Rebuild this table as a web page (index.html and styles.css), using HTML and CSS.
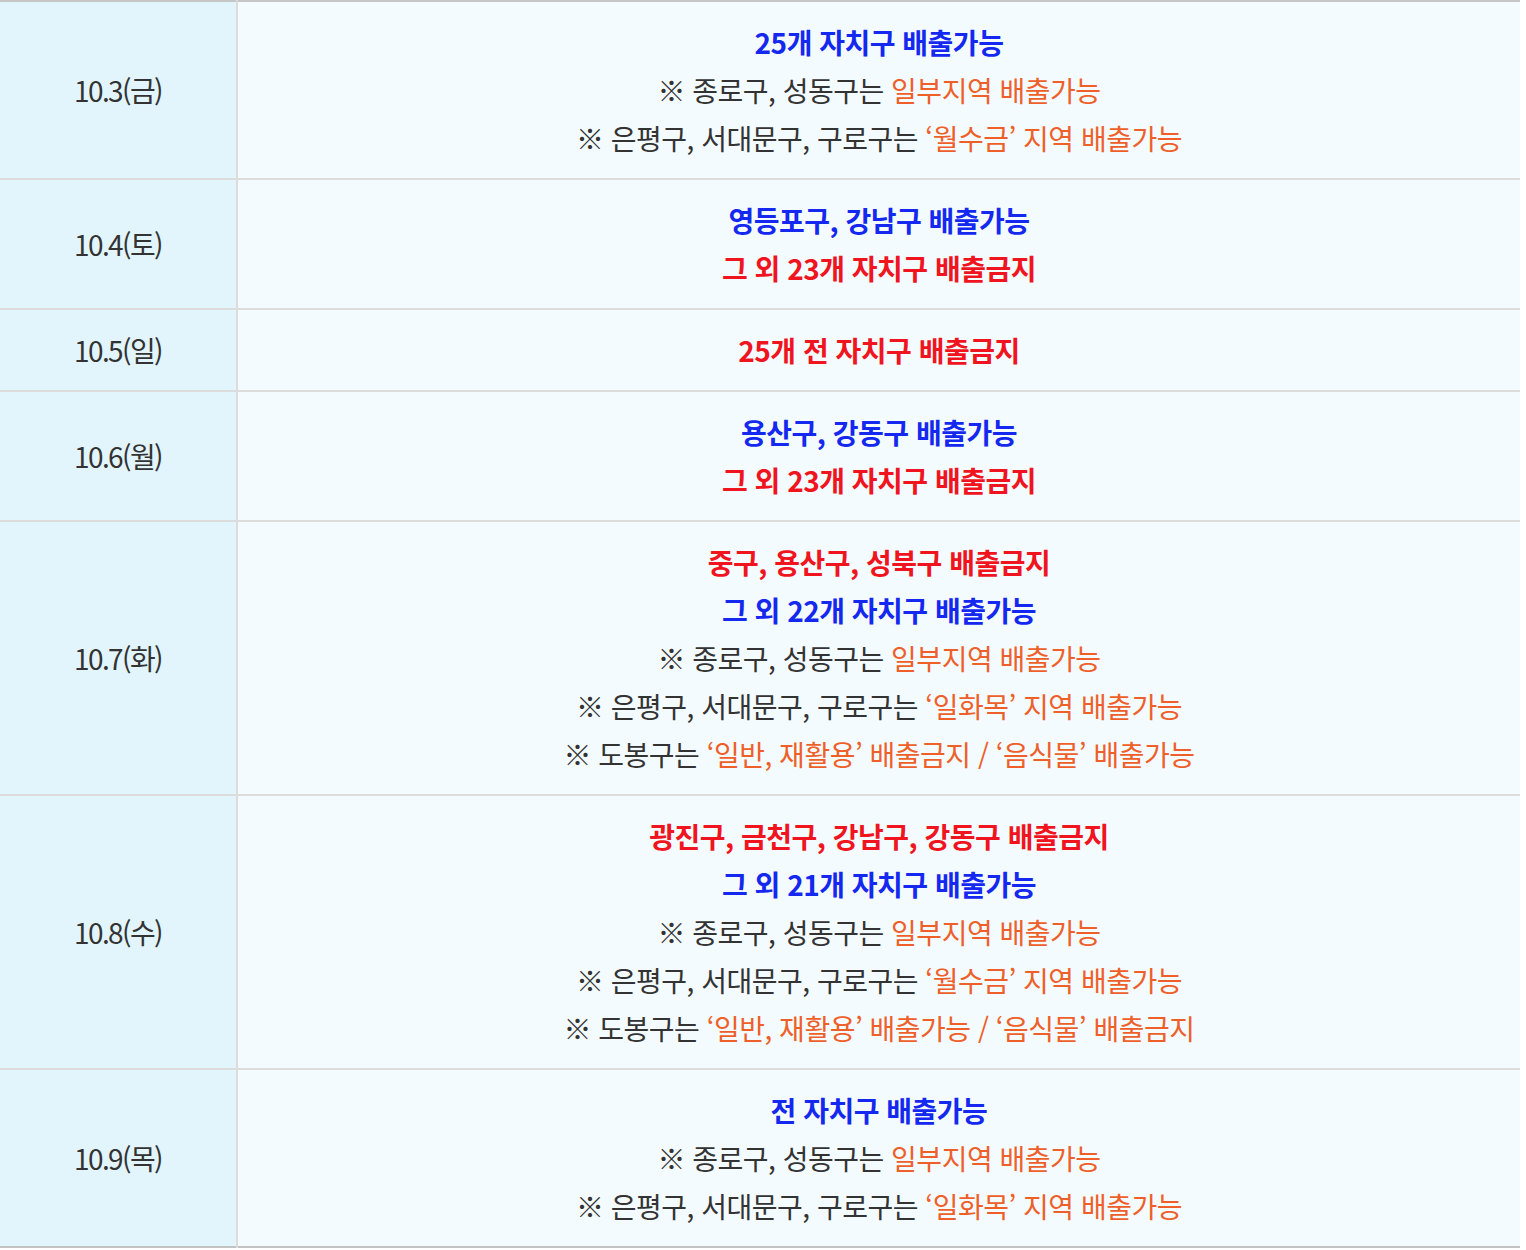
FILE: index.html
```html
<!DOCTYPE html>
<html lang="ko">
<head>
<meta charset="utf-8">
<link rel="stylesheet" href="styles.css">
</head>
<body>
<table class="sched">
  <tbody>
    <tr>
      <th class="date">10.3(금)</th>
      <td class="info">
        <p class="b">25개 자치구 배출가능</p>
        <p>※ 종로구, 성동구는 <span class="o">일부지역 배출가능</span></p>
        <p>※ 은평구, 서대문구, 구로구는 <span class="o">‘월수금’ 지역 배출가능</span></p>
      </td>
    </tr>
    <tr>
      <th class="date">10.4(토)</th>
      <td class="info">
        <p class="b">영등포구, 강남구 배출가능</p>
        <p class="r">그 외 23개 자치구 배출금지</p>
      </td>
    </tr>
    <tr>
      <th class="date">10.5(일)</th>
      <td class="info">
        <p class="r">25개 전 자치구 배출금지</p>
      </td>
    </tr>
    <tr>
      <th class="date">10.6(월)</th>
      <td class="info">
        <p class="b">용산구, 강동구 배출가능</p>
        <p class="r">그 외 23개 자치구 배출금지</p>
      </td>
    </tr>
    <tr>
      <th class="date">10.7(화)</th>
      <td class="info">
        <p class="r">중구, 용산구, 성북구 배출금지</p>
        <p class="b">그 외 22개 자치구 배출가능</p>
        <p>※ 종로구, 성동구는 <span class="o">일부지역 배출가능</span></p>
        <p>※ 은평구, 서대문구, 구로구는 <span class="o">‘일화목’ 지역 배출가능</span></p>
        <p>※ 도봉구는 <span class="o">‘일반, 재활용’ 배출금지 / ‘음식물’ 배출가능</span></p>
      </td>
    </tr>
    <tr>
      <th class="date">10.8(수)</th>
      <td class="info">
        <p class="r">광진구, 금천구, 강남구, 강동구 배출금지</p>
        <p class="b">그 외 21개 자치구 배출가능</p>
        <p>※ 종로구, 성동구는 <span class="o">일부지역 배출가능</span></p>
        <p>※ 은평구, 서대문구, 구로구는 <span class="o">‘월수금’ 지역 배출가능</span></p>
        <p>※ 도봉구는 <span class="o">‘일반, 재활용’ 배출가능 / ‘음식물’ 배출금지</span></p>
      </td>
    </tr>
    <tr>
      <th class="date">10.9(목)</th>
      <td class="info">
        <p class="b">전 자치구 배출가능</p>
        <p>※ 종로구, 성동구는 <span class="o">일부지역 배출가능</span></p>
        <p>※ 은평구, 서대문구, 구로구는 <span class="o">‘일화목’ 지역 배출가능</span></p>
      </td>
    </tr>
  </tbody>
</table>
</body>
</html>
```
FILE: styles.css
```css
html, body {
  margin: 0;
  padding: 0;
  background: #ffffff;
}
body {
  font-family: "Noto Sans CJK KR", "Noto Sans", sans-serif;
  color: #333333;
}
.sched {
  width: 1520px;
  border-collapse: collapse;
  border-top: 2px solid #c6c6c6;
  border-bottom: 2px solid #c2c2c2;
}
.sched tr {
  border-top: 2px solid #dcdcdc;
}
.sched tr:first-child {
  border-top: 2px solid #c6c6c6;
}
.date {
  width: 236px;
  background: #e2f5fd;
  border-right: 2px solid #dcdcdc;
  font-weight: 400;
  font-size: 28px;
  letter-spacing: -1.6px;
  color: #333333;
  text-align: center;
  vertical-align: middle;
  padding: 0;
}
.info {
  background: #f3fbfe;
  text-align: center;
  padding: 16px 0;
  font-size: 28px;
  letter-spacing: -0.5px;
}
.info p {
  margin: 0;
  line-height: 48px;
  color: #333333;
}
.info p.b {
  color: #1428f0;
  font-weight: 700;
}
.info p.r {
  color: #f0141e;
  font-weight: 700;
}
.o {
  color: #ee5f2a;
}
```
